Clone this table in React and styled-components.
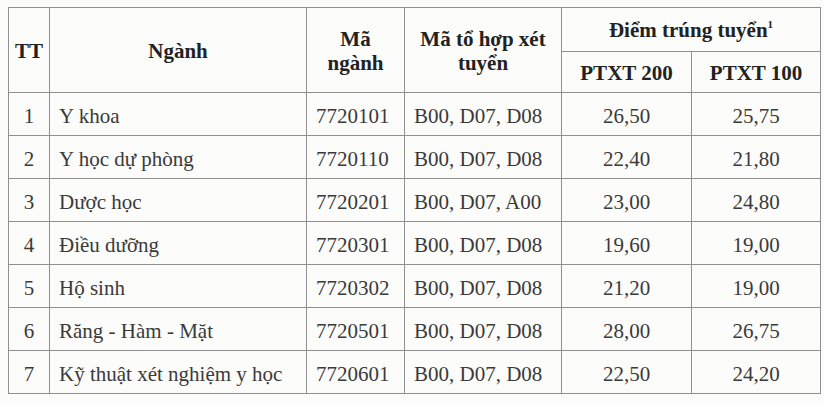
import React from "react";
import styled, { createGlobalStyle } from "styled-components";

const Global = createGlobalStyle`
  html, body { margin: 0; padding: 0; background: #fcfcfa; }
  body { font-family: "Liberation Serif", "Times New Roman", serif; color: #2e2e2e; }
`;

const Page = styled.div`
  width: 824px;
  height: 403px;
  padding: 7px 0 0 8px;
  box-sizing: border-box;
  overflow: hidden;
`;

const Table = styled.table`
  border-collapse: collapse;
  table-layout: fixed;
  width: 812px;
  font-size: 21px;
  border: 1.5px solid #909090;
`;

const Th = styled.th`
  border: 1px solid #909090;
  font-weight: bold;
  text-align: center;
  vertical-align: middle;
  line-height: 1.15;
  padding: 2px 4px 0;
  height: ${(p) => p.$h}px;
  box-sizing: border-box;
  color: #222;
`;

const Td = styled.td`
  border: 1px solid #909090;
  height: 43px;
  box-sizing: border-box;
  line-height: 1;
  padding: 4px 0 0 ${(p) => (p.$align === "left" ? "9px" : "0")};
  text-align: ${(p) => p.$align || "center"};
  vertical-align: middle;
  white-space: nowrap;
  color: #3a3a3a;
`;

const Sup = styled.sup`
  font-size: 11px;
  vertical-align: 9px;
  line-height: 0;
`;

const rows = [
  ["1", "Y khoa", "7720101", "B00, D07, D08", "26,50", "25,75"],
  ["2", "Y học dự phòng", "7720110", "B00, D07, D08", "22,40", "21,80"],
  ["3", "Dược học", "7720201", "B00, D07, A00", "23,00", "24,80"],
  ["4", "Điều dưỡng", "7720301", "B00, D07, D08", "19,60", "19,00"],
  ["5", "Hộ sinh", "7720302", "B00, D07, D08", "21,20", "19,00"],
  ["6", "Răng - Hàm - Mặt", "7720501", "B00, D07, D08", "28,00", "26,75"],
  ["7", "Kỹ thuật xét nghiệm y học", "7720601", "B00, D07, D08", "22,50", "24,20"],
];

export default function App() {
  return (
    <Page>
      <Global />
      <Table>
        <colgroup>
          <col style={{ width: 41 }} />
          <col style={{ width: 257 }} />
          <col style={{ width: 98 }} />
          <col style={{ width: 157 }} />
          <col style={{ width: 130 }} />
          <col style={{ width: 129 }} />
        </colgroup>
        <thead>
          <tr>
            <Th rowSpan={2} $h={44}>TT</Th>
            <Th rowSpan={2} $h={44}>Ngành</Th>
            <Th rowSpan={2} $h={44}>Mã<br />ngành</Th>
            <Th rowSpan={2} $h={44}>Mã tổ hợp xét<br />tuyển</Th>
            <Th colSpan={2} $h={44}>Điểm trúng tuyển<Sup>1</Sup></Th>
          </tr>
          <tr>
            <Th $h={41}>PTXT 200</Th>
            <Th $h={41}>PTXT 100</Th>
          </tr>
        </thead>
        <tbody>
          {rows.map((r) => (
            <tr key={r[0]}>
              <Td>{r[0]}</Td>
              <Td $align="left">{r[1]}</Td>
              <Td $align="left">{r[2]}</Td>
              <Td $align="left">{r[3]}</Td>
              <Td>{r[4]}</Td>
              <Td>{r[5]}</Td>
            </tr>
          ))}
        </tbody>
      </Table>
    </Page>
  );
}
